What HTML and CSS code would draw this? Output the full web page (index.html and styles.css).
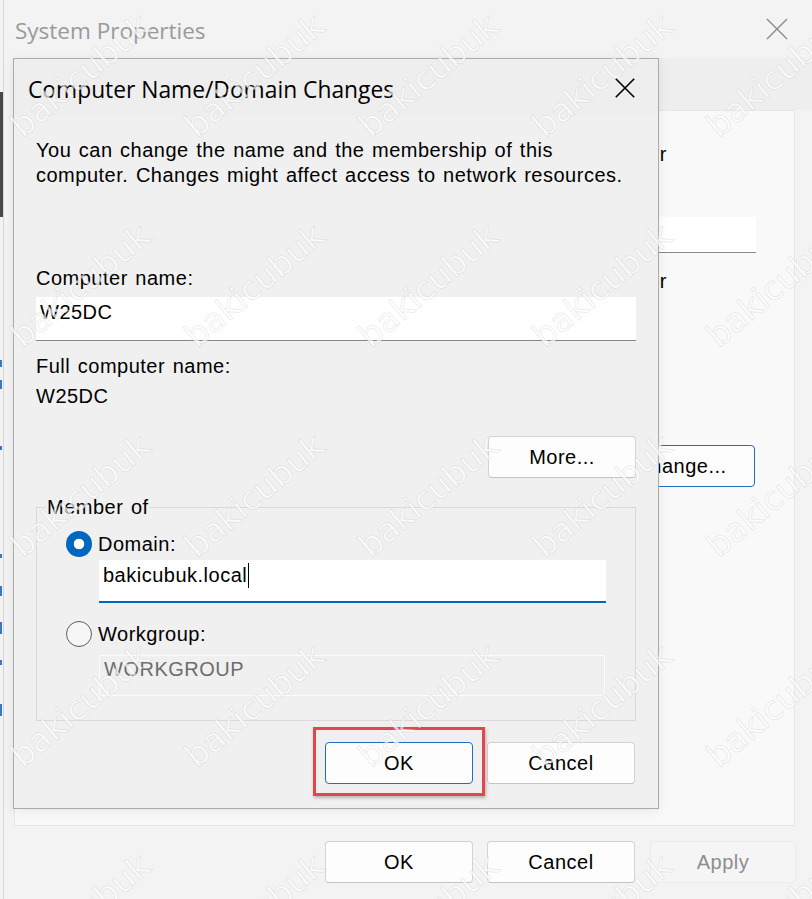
FILE: index.html
```html
<!DOCTYPE html>
<html lang="en">
<head>
<meta charset="utf-8">
<title>System Properties</title>
<link rel="stylesheet" href="styles.css">
</head>
<body>
<div class="screen">
  <div class="edge"></div>
  <div class="win">
    <div class="win-titlebar">
      <span class="win-title">System Properties</span>
      <svg class="win-close" width="22" height="22" viewBox="0 0 22 22"><path d="M1 1 L21 21 M21 1 L1 21" stroke="#8a8a8a" stroke-width="1.4" fill="none"/></svg>
    </div>
    <div class="tabs"></div>
    <div class="panel">
      <div class="bg-line bg-line1">Windows uses the following information to identify your</div>
      <div class="bg-input"></div>
      <div class="bg-line bg-line2">For example: “IIS Production Server” or</div>
      <div class="btn btn-default bg-change">Change...</div>
    </div>
    <div class="bottom-row">
      <div class="btn">OK</div>
      <div class="btn">Cancel</div>
      <div class="btn btn-disabled btn-apply">Apply</div>
    </div>
  </div>

  <div class="dialog">
    <div class="dlg-titlebar">
      <span class="dlg-title">Computer Name/Domain Changes</span>
      <svg class="dlg-close" width="20" height="20" viewBox="0 0 20 20"><path d="M0.8 0.8 L19.2 19.2 M19.2 0.8 L0.8 19.2" stroke="#000" stroke-width="1.6" fill="none"/></svg>
    </div>
    <div class="dlg-body">
      <div class="intro">You can change the name and the membership of this<br>computer. Changes might affect access to network resources.</div>
      <div class="label lbl-compname">Computer name:</div>
      <div class="field field-name">W25DC</div>
      <div class="label lbl-full">Full computer name:</div>
      <div class="label lbl-fullval">W25DC</div>
      <div class="more-row"><div class="btn">More...</div></div>
      <div class="group">
        <div class="legend">Member of</div>
        <div class="radio-row radio-row1"><span class="radio radio-on"></span><span>Domain:</span></div>
        <div class="field field-domain">bakicubuk.local<span class="caret"></span></div>
        <div class="radio-row radio-row2"><span class="radio"></span><span>Workgroup:</span></div>
        <div class="field field-work">WORKGROUP</div>
      </div>
      <div class="dlg-buttons">
        <div class="btn btn-default btn-marked">OK</div>
        <div class="btn">Cancel</div>
      </div>
    </div>
  </div>

  <div class="watermarks">
    <span>bakicubuk</span><span>bakicubuk</span><span>bakicubuk</span><span>bakicubuk</span><span>bakicubuk</span>
    <span>bakicubuk</span><span>bakicubuk</span><span>bakicubuk</span><span>bakicubuk</span><span>bakicubuk</span>
    <span>bakicubuk</span><span>bakicubuk</span><span>bakicubuk</span><span>bakicubuk</span><span>bakicubuk</span>
    <span>bakicubuk</span><span>bakicubuk</span><span>bakicubuk</span><span>bakicubuk</span><span>bakicubuk</span>
    <span>bakicubuk</span><span>bakicubuk</span><span>bakicubuk</span><span>bakicubuk</span><span>bakicubuk</span>
  </div>
</div>
</body>
</html>
```

FILE: styles.css
```css
* { box-sizing: border-box; }
html, body { margin: 0; padding: 0; }
body {
  font-family: "Liberation Sans", Arial, sans-serif;
  font-size: 20px;
  letter-spacing: 0.5px;
  word-spacing: 1.5px;
  color: #000;
  background: #f3f3f3;
}
.screen {
  position: relative;
  width: 812px;
  height: 899px;
  overflow: hidden;
  display: flex;
  background: #f3f3f3;
}
.edge {
  flex: none;
  width: 4px;
  background:
    linear-gradient(#484848, #484848) 0 92px / 3px 125px no-repeat,
    linear-gradient(#3b78c0, #3b78c0) 0 360px / 2px 7px no-repeat,
    linear-gradient(#3b78c0, #3b78c0) 0 380px / 2px 9px no-repeat,
    linear-gradient(#3b78c0, #3b78c0) 0 446px / 2px 4px no-repeat,
    linear-gradient(#3b78c0, #3b78c0) 0 554px / 2px 4px no-repeat,
    linear-gradient(#3b78c0, #3b78c0) 0 586px / 2px 10px no-repeat,
    linear-gradient(#3b78c0, #3b78c0) 0 622px / 2px 12px no-repeat,
    linear-gradient(#3b78c0, #3b78c0) 0 660px / 2px 5px no-repeat,
    linear-gradient(#3b78c0, #3b78c0) 0 704px / 2px 12px no-repeat,
    linear-gradient(#d6d6d6, #d6d6d6) 3px 0 / 1px 100% no-repeat;
}
.win {
  flex: 1;
  display: flex;
  flex-direction: column;
}
.win-titlebar {
  height: 58px;
  display: flex;
  align-items: center;
  justify-content: space-between;
  padding: 0 24px 0 11px;
}
.win-title {
  font-family: "Open Sans", "Noto Sans", sans-serif;
  font-size: 22.5px;
  letter-spacing: 0;
  word-spacing: 0;
  color: #9a9a9a;
  margin-top: 2px;
}
.win-close { margin-top: -1px; }
.tabs {
  height: 52px;
  background: #eeeeee;
  margin-left: 10px;
}
.panel {
  height: 716px;
  margin: 0 17px 0 10px;
  background: #f9f9f9;
  border: 1px solid #e6e6e6;
  display: flex;
  flex-direction: column;
  align-items: flex-start;
  padding-top: 31px;
}
.bg-line {
  width: 652px;
  text-align: right;
  line-height: 25px;
  white-space: nowrap;
}
.bg-input {
  align-self: flex-end;
  margin: 50px 38px 0 0;
  width: 300px;
  height: 36px;
  background: #ffffff;
  border-bottom: 1px solid #8a8a8a;
}
.bg-line2 { margin-top: 16px; }
.bg-change {
  align-self: flex-end;
  margin: 151px 39px 0 0;
  height: 41px;
}
.bottom-row {
  display: flex;
  justify-content: flex-end;
  gap: 14px;
  padding: 15px 16px 0 0;
}
.btn {
  width: 148px;
  height: 42px;
  display: flex;
  align-items: center;
  justify-content: center;
  background: #fdfdfd;
  border: 1px solid #d3d3d3;
  border-bottom-color: #c4c4c4;
  border-radius: 4px;
  line-height: 25px;
}
.btn-default {
  border: 1px solid #1f6fc0;
  background: #fdfdfd;
}
.btn-disabled {
  background: #f5f5f5;
  border-color: #ececec;
  color: #8d8d8d;
}
.btn-apply { width: 146px; margin-left: 1px; }

/* dialog window on top */
.dialog {
  position: absolute;
  left: 13px;
  top: 58px;
  width: 646px;
  height: 751px;
  border: 1px solid #ababab;
  background: #f0f0f0;
  box-shadow: 0 2px 10px rgba(0,0,0,0.08);
  display: flex;
  flex-direction: column;
}
.dlg-titlebar {
  height: 57px;
  flex: none;
  display: flex;
  align-items: center;
  justify-content: space-between;
  padding: 0 23px 0 14px;
  background: #eeeeee;
}
.dlg-title {
  font-family: "Open Sans", "Noto Sans", sans-serif;
  font-size: 22.8px;
  letter-spacing: 0;
  word-spacing: 0;
  color: #000;
  margin-top: 3px;
}
.dlg-close { margin-top: 0px; }
.dlg-body {
  padding: 0 22px;
  display: flex;
  flex-direction: column;
}
.intro {
  margin-top: 22px;
  line-height: 25px;
  white-space: nowrap;
}
.label { line-height: 25px; }
.lbl-compname { margin-top: 78px; }
.field {
  line-height: 25px;
  padding-left: 4px;
  white-space: nowrap;
}
.field-name {
  margin-top: 6px;
  height: 44px;
  padding-top: 3px;
  background: #ffffff;
  border-bottom: 1px solid #878787;
}
.lbl-full { margin-top: 13px; }
.lbl-fullval { margin-top: 5px; }
.more-row {
  margin-top: 27px;
  display: flex;
  justify-content: flex-end;
}
.group {
  margin-top: 29px;
  border: 1px solid #dadada;
  padding: 0 29px 24px 29px;
  display: flex;
  flex-direction: column;
}
.legend {
  margin: -13px 0 0 -20px;
  padding: 0 1px;
  width: fit-content;
  background: #f0f0f0;
  line-height: 25px;
}
.radio-row {
  display: flex;
  align-items: center;
  gap: 6px;
  height: 26px;
  line-height: 25px;
}
.radio-row1 { margin-top: 11px; }
.radio-row2 { margin-top: 18px; }
.radio {
  flex: none;
  width: 26px;
  height: 26px;
  border-radius: 50%;
  border: 1.5px solid #5c5c5c;
  background: #f6f6f6;
}
.radio-on {
  border: none;
  background: radial-gradient(circle, #ffffff 0 5px, #0067c0 5.6px);
}
.field-domain {
  margin: 3px 0 0 33px;
  width: 507px;
  height: 43px;
  padding-top: 3px;
  background: #ffffff;
  border-bottom: 2px solid #0067c0;
}
.caret {
  display: inline-block;
  width: 1px;
  height: 25px;
  background: #000;
  vertical-align: -6px;
  margin-left: 1px;
}
.field-work {
  margin: 8px 0 0 33px;
  width: 506px;
  height: 41px;
  padding-top: 1px;
  border: 1px solid #fbfbfb;
  color: #6d6d6d;
}
.dlg-buttons {
  margin-top: 21px;
  display: flex;
  justify-content: flex-end;
  gap: 14px;
  padding-right: 1px;
}
.btn-marked { position: relative; }
.btn-marked::after {
  content: "";
  position: absolute;
  left: -13px;
  right: -13px;
  top: -16px;
  bottom: -13px;
  border: 3px solid #e3474d;
  box-shadow: 1px 2px 3px rgba(0,0,0,0.25);
}

/* watermark overlay */
.watermarks {
  position: absolute;
  left: -7px;
  top: -30px;
  width: 870px;
  height: 1050px;
  pointer-events: none;
  display: grid;
  grid-template-columns: repeat(5, 174px);
  grid-auto-rows: 210px;
}
.watermarks span {
  display: flex;
  align-items: center;
  justify-content: center;
  font-family: "DejaVu Sans", sans-serif;
  font-size: 33px;
  letter-spacing: 0;
  color: rgba(255,255,255,0.7);
  -webkit-text-stroke: 1px rgba(175,175,175,0.22);
  transform: rotate(-40deg);
}
```
